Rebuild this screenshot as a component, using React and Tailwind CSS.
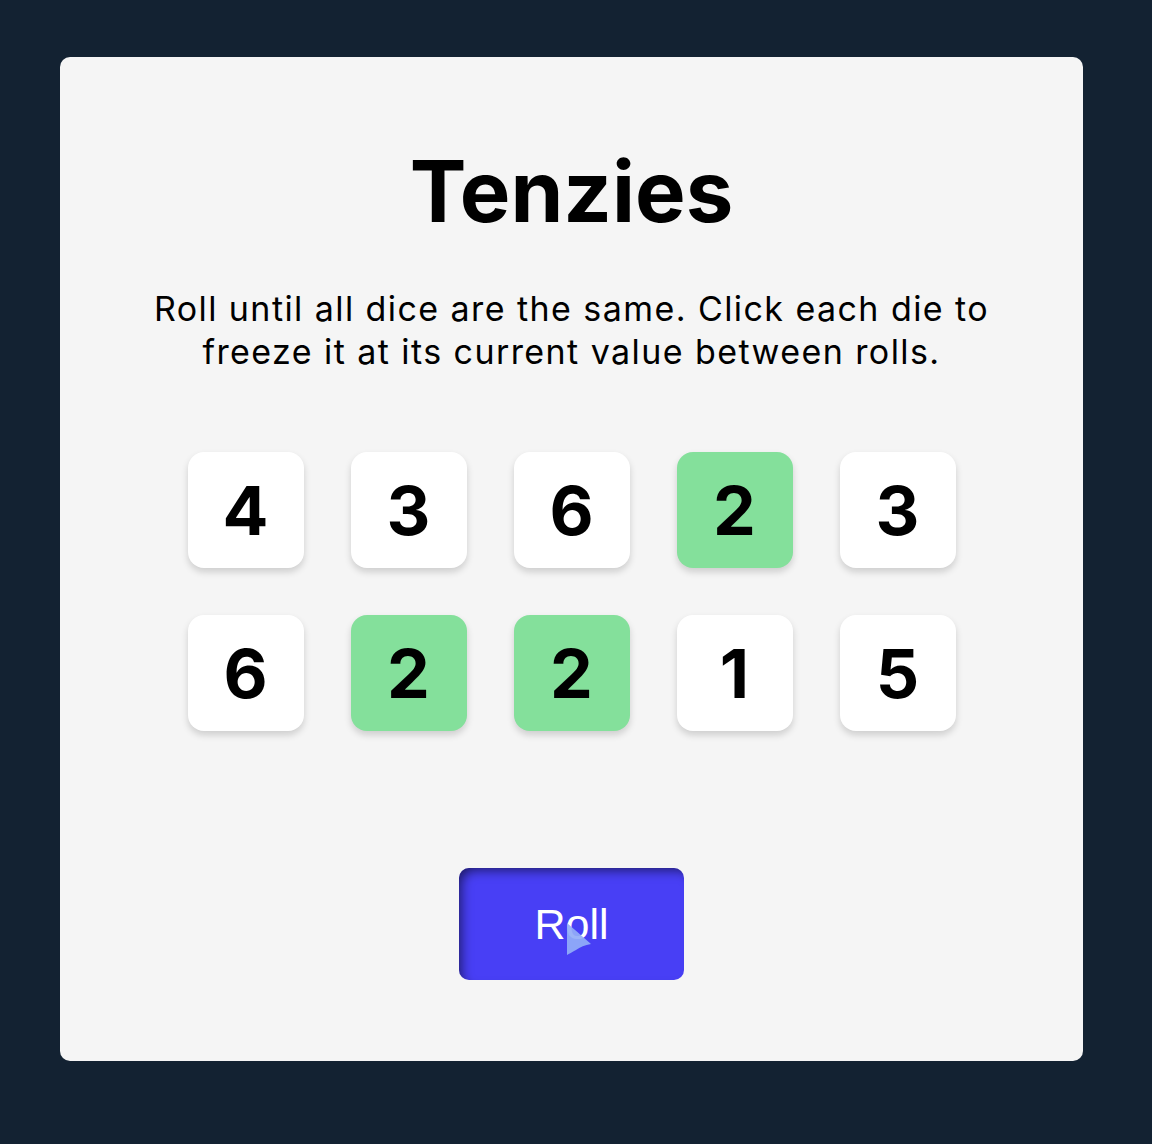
import React, { useState } from 'react';

const initialDice = [
  { value: 4, held: false },
  { value: 3, held: false },
  { value: 6, held: false },
  { value: 2, held: true },
  { value: 3, held: false },
  { value: 6, held: false },
  { value: 2, held: true },
  { value: 2, held: true },
  { value: 1, held: false },
  { value: 5, held: false },
];

function Die({ value, held, onClick }) {
  return (
    <button
      onClick={onClick}
      className={`w-[116px] h-[116px] rounded-[16px] flex items-center justify-center shadow-[0_4px_7px_rgba(0,0,0,0.16)] ${held ? 'bg-[#84E09B]' : 'bg-white'}`}
    >
      <span className="text-[68px] leading-none font-bold text-black font-['Inter',sans-serif]">{value}</span>
    </button>
  );
}

export default function App() {
  const [dice, setDice] = useState(initialDice);

  const toggle = (i) =>
    setDice(d => d.map((die, idx) => (idx === i ? { ...die, held: !die.held } : die)));

  const roll = () =>
    setDice(d => d.map(die => (die.held ? die : { ...die, value: Math.ceil(Math.random() * 6) })));

  return (
    <div className="w-[1152px] h-[1144px] bg-[#132232] pt-[57px] pl-[60px] font-['Inter',sans-serif]">
      <main className="w-[1023px] h-[1004px] bg-[#F5F5F5] rounded-[10px] flex flex-col items-center pt-[92px]">
        <h1 className="text-[85px] leading-none font-bold text-black">Tenzies</h1>
        <p className="mt-[53px] text-[34px] leading-[43px] tracking-[0.042em] text-black text-center w-[900px]">
          Roll until all dice are the same. Click each die to freeze it at its current value between rolls.
        </p>

        <div className="mt-[79px] grid grid-cols-5 gap-x-[47px] gap-y-[47px]">
          {dice.map((die, i) => (
            <Die key={i} value={die.value} held={die.held} onClick={() => toggle(i)} />
          ))}
        </div>

        <div className="relative mt-[137px]">
          <button
            onClick={roll}
            className="w-[225px] h-[112px] rounded-[10px] bg-[#483FF5] text-white text-[43px] font-['Liberation_Sans',Arial,sans-serif] shadow-[inset_6px_6px_12px_-4px_rgba(0,0,0,0.6)]"
          >
            Roll
          </button>
          {/* mouse pointer caught in the screenshot */}
          <svg className="absolute left-[107px] top-[54px] pointer-events-none" width="28" height="34" viewBox="0 0 28 34">
            <path d="M1 1 C8 7 16 14 25 22 C19 23 14 25 10 28 C6 30 3 32 1 33 Z" fill="#93AEF7" fillOpacity="0.92" />
          </svg>
        </div>
      </main>
    </div>
  );
}
